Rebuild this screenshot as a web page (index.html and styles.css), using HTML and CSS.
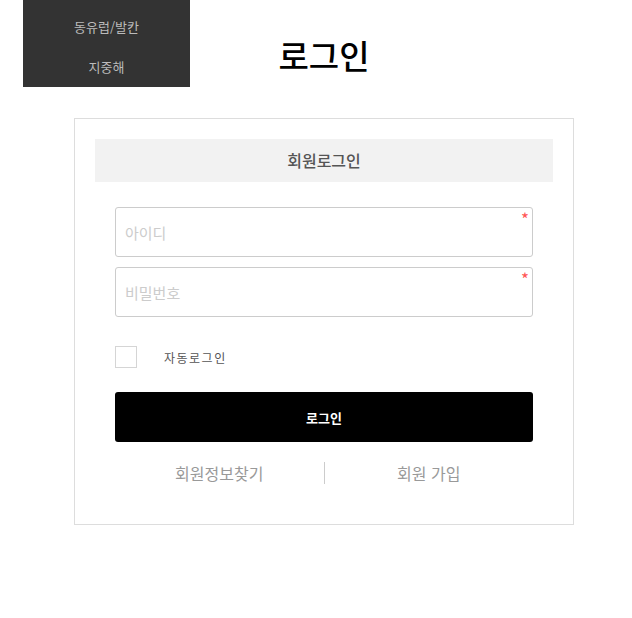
FILE: index.html
```html
<!DOCTYPE html>
<html lang="ko">
<head>
<meta charset="utf-8">
<title>로그인</title>
<link rel="stylesheet" href="styles.css">
</head>
<body>
<nav class="dropdown">
  <a class="dropdown-item">동유럽/발칸</a>
  <a class="dropdown-item">지중해</a>
</nav>
<main class="page">
  <h1 class="page-title">로그인</h1>
  <section class="login-card">
    <h2 class="card-head">회원로그인</h2>
    <form class="login-form">
      <div class="field">
        <input class="field-input" type="text" placeholder="아이디">
        <span class="req">*</span>
      </div>
      <div class="field">
        <input class="field-input" type="password" placeholder="비밀번호">
        <span class="req">*</span>
      </div>
      <label class="auto">
        <span class="check"></span>
        <span class="auto-text">자동로그인</span>
      </label>
      <button class="submit" type="button">로그인</button>
      <div class="links">
        <a class="link">회원정보찾기</a>
        <a class="link">회원 가입</a>
      </div>
    </form>
  </section>
</main>
</body>
</html>
```

FILE: styles.css
```css
* { box-sizing: border-box; }
html, body { margin: 0; padding: 0; background: #fff; }
body {
  font-family: "Noto Sans CJK KR", "Noto Sans", sans-serif;
  color: #333;
  position: relative;
}
.dropdown {
  position: absolute;
  left: 23px;
  top: 0;
  width: 167px;
  height: 87px;
  background: #333;
  display: flex;
  flex-direction: column;
  align-items: center;
  padding-top: 16px;
  gap: 18px;
}
.dropdown-item {
  font-size: 13px;
  line-height: 22px;
  color: #bbb;
}
.page {
  width: 500px;
  margin-left: 74px;
  padding-top: 30px;
}
.page-title {
  margin: 0;
  text-align: center;
  font-size: 33px;
  font-weight: 500;
  line-height: 50px;
  color: #000;
}
.login-card {
  margin-top: 38px;
  border: 1px solid #ddd;
  padding: 20px 20px 40px;
}
.card-head {
  margin: 0;
  height: 43px;
  background: #f2f2f2;
  text-align: center;
  font-size: 16px;
  font-weight: 500;
  line-height: 43px;
  color: #555;
}
.login-form {
  padding: 25px 20px 0;
  display: flex;
  flex-direction: column;
}
.field {
  position: relative;
  margin-bottom: 10px;
}
.field-input {
  display: block;
  width: 100%;
  height: 50px;
  border: 1px solid #ccc;
  border-radius: 3px;
  padding: 0 9px;
  font-family: inherit;
  font-size: 15px;
  color: #333;
  outline: none;
}
.field-input::placeholder { color: #ccc; }
.req {
  position: absolute;
  right: 4px;
  top: 2px;
  font-size: 17px;
  font-weight: 400;
  line-height: 20px;
  color: #f55;
}
.auto {
  display: flex;
  align-items: center;
  margin-top: 19px;
  height: 22px;
}
.check {
  width: 22px;
  height: 22px;
  border: 1px solid #d5d5d5;
  background: #fff;
}
.auto-text {
  margin-left: 27px;
  font-size: 12px;
  letter-spacing: 1.5px;
  color: #555;
}
.submit {
  margin-top: 24px;
  height: 50px;
  border: 0;
  border-radius: 3px;
  background: #000;
  color: #fff;
  font-family: inherit;
  font-size: 13px;
  font-weight: 700;
}
.links {
  margin-top: 20px;
  display: flex;
  height: 22px;
}
.link {
  flex: 1;
  text-align: center;
  font-size: 16px;
  line-height: 22px;
  color: #999;
}
.link + .link { border-left: 1px solid #ccc; }
```
